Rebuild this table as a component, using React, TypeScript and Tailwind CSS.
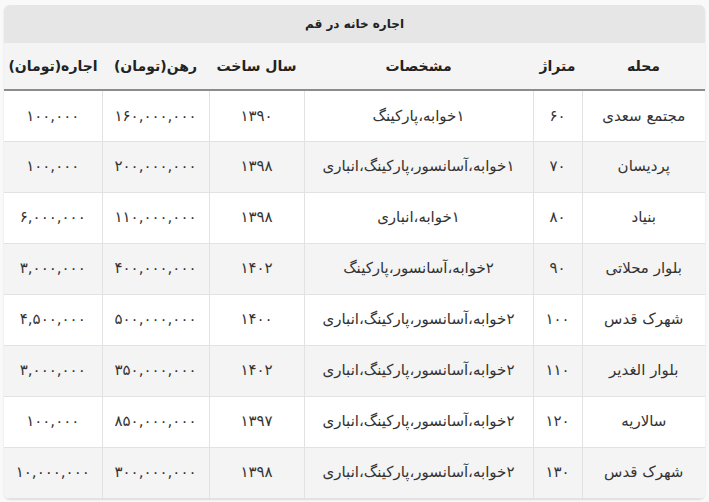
import React from "react"

const rows = [
  ["مجتمع سعدی", "۶۰", "۱خوابه،پارکینگ", "۱۳۹۰", "۱۶۰,۰۰۰,۰۰۰", "۱۰۰,۰۰۰"],
  ["پردیسان", "۷۰", "۱خوابه،آسانسور،پارکینگ،انباری", "۱۳۹۸", "۲۰۰,۰۰۰,۰۰۰", "۱۰۰,۰۰۰"],
  ["بنیاد", "۸۰", "۱خوابه،انباری", "۱۳۹۸", "۱۱۰,۰۰۰,۰۰۰", "۶,۰۰۰,۰۰۰"],
  ["بلوار محلاتی", "۹۰", "۲خوابه،آسانسور،پارکینگ", "۱۴۰۲", "۴۰۰,۰۰۰,۰۰۰", "۳,۰۰۰,۰۰۰"],
  ["شهرک قدس", "۱۰۰", "۲خوابه،آسانسور،پارکینگ،انباری", "۱۴۰۰", "۵۰۰,۰۰۰,۰۰۰", "۴,۵۰۰,۰۰۰"],
  ["بلوار الغدیر", "۱۱۰", "۲خوابه،آسانسور،پارکینگ،انباری", "۱۴۰۲", "۳۵۰,۰۰۰,۰۰۰", "۳,۰۰۰,۰۰۰"],
  ["سالاریه", "۱۲۰", "۲خوابه،آسانسور،پارکینگ،انباری", "۱۳۹۷", "۸۵۰,۰۰۰,۰۰۰", "۱۰۰,۰۰۰"],
  ["شهرک قدس", "۱۳۰", "۲خوابه،آسانسور،پارکینگ،انباری", "۱۳۹۸", "۳۰۰,۰۰۰,۰۰۰", "۱۰,۰۰۰,۰۰۰"],
]

const headers = ["محله", "متراژ", "مشخصات", "سال ساخت", "رهن(تومان)", "اجاره(تومان)"]
const widths = ["w-[123px]", "w-[49px]", "w-[229px]", "w-[95px]", "w-[107px]", "w-[98px]"]

export default function App() {
  return (
    <div className="min-h-[502px] bg-[#f9f9f9] px-[4px] pt-[5px] font-['DejaVu_Sans',sans-serif] text-[#333]">
      <div dir="rtl" className="rounded-md bg-[#f4f4f4] shadow-[0_1px_2px_rgba(0,0,0,0.12)] overflow-hidden">
        <div className="h-[38px] bg-[#e6e6e6] flex items-center justify-center text-[12px] font-bold text-[#222]">
          اجاره خانه در قم
        </div>
        <table className="w-full table-fixed border-collapse">
          <thead>
            <tr className="h-[47px] border-b-2 border-[#8c8c8c]">
              {headers.map((h, i) => (
                <th key={i} className={`${widths[i]} font-bold text-[14px] text-[#222] text-center`}>
                  {h}
                </th>
              ))}
            </tr>
          </thead>
          <tbody>
            {rows.map((r, ri) => (
              <tr key={ri} className={`h-[51px] ${ri % 2 === 0 ? "bg-white" : "bg-[#f4f4f4]"}`}>
                {r.map((c, ci) => (
                  <td
                    key={ci}
                    className="border-b border-l last:border-l-0 border-[#e2e2e2] text-center text-[15px] text-[#333]"
                  >
                    {c}
                  </td>
                ))}
              </tr>
            ))}
          </tbody>
        </table>
      </div>
    </div>
  )
}
